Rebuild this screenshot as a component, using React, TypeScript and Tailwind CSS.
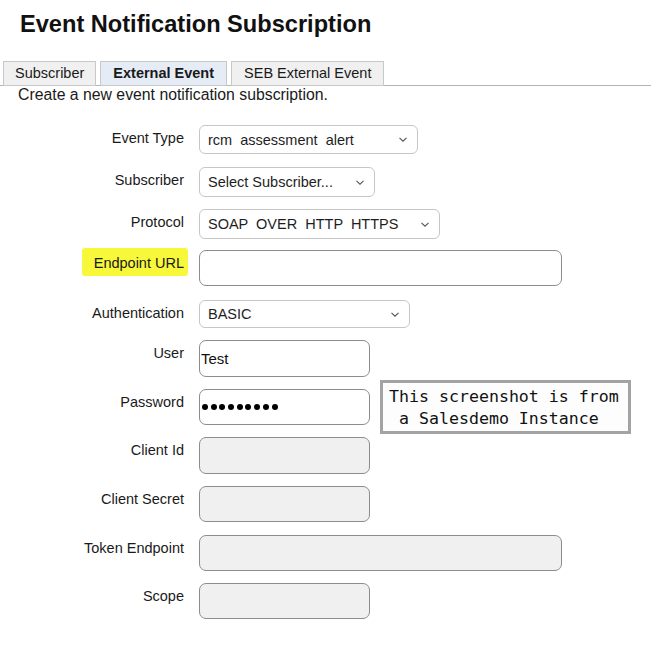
import React from "react";

type Row = {
  label: string;
  rowCls: string;
  kind: "select" | "input";
  fieldCls: string;
  value?: string;
  password?: boolean;
  disabled?: boolean;
  highlight?: boolean;
};

const rows: Row[] = [
  { label: "Event Type", rowCls: "mt-0", kind: "select", fieldCls: "w-[219px] h-[29px]", value: "rcm  assessment  alert" },
  { label: "Subscriber", rowCls: "mt-[13px]", kind: "select", fieldCls: "w-[176px] h-[30px]", value: "Select Subscriber..." },
  { label: "Protocol", rowCls: "mt-[12px]", kind: "select", fieldCls: "w-[241px] h-[30px]", value: "SOAP  OVER  HTTP  HTTPS" },
  { label: "Endpoint URL", rowCls: "mt-[11px]", kind: "input", fieldCls: "w-[363px] h-[36px]", highlight: true },
  { label: "Authentication", rowCls: "mt-[14px]", kind: "select", fieldCls: "w-[211px] h-[28px]", value: "BASIC" },
  { label: "User", rowCls: "mt-[12px]", kind: "input", fieldCls: "w-[171px] h-[37px]", value: "Test" },
  { label: "Password", rowCls: "mt-[12px]", kind: "input", fieldCls: "w-[171px] h-[36px]", password: true },
  { label: "Client Id", rowCls: "mt-[12px]", kind: "input", fieldCls: "w-[171px] h-[37px]", disabled: true },
  { label: "Client Secret", rowCls: "mt-[12px]", kind: "input", fieldCls: "w-[171px] h-[36px]", disabled: true },
  { label: "Token Endpoint", rowCls: "mt-[13px]", kind: "input", fieldCls: "w-[363px] h-[36px]", disabled: true },
  { label: "Scope", rowCls: "mt-[12px]", kind: "input", fieldCls: "w-[171px] h-[36px]", disabled: true },
];

function Chevron() {
  return (
    <svg width="8" height="5" viewBox="0 0 8 5" className="shrink-0">
      <polyline points="0.5,0.8 4,4.2 7.5,0.8" fill="none" stroke="#555" strokeWidth="1.1" />
    </svg>
  );
}

function Field({ row }: { row: Row }) {
  if (row.kind === "select") {
    return (
      <div
        className={`${row.fieldCls} flex items-center justify-between rounded-[6px] border border-[#c6c6c6] bg-white pl-[8px] pr-[10px]`}
      >
        <span className="whitespace-pre text-[14.5px] leading-[18px] text-[#1e1e1e]">{row.value}</span>
        <Chevron />
      </div>
    );
  }
  return (
    <div
      className={`${row.fieldCls} flex items-center rounded-[7px] border border-[#8c8c8c] ${
        row.disabled ? "bg-[#f0f0f0]" : "bg-white"
      } pl-[1px]`}
    >
      {row.value && <span className="text-[15px] leading-[18px] text-[#111]">{row.value}</span>}
      {row.password && (
        <div className="flex items-center gap-[2.7px] pl-[1px]">
          {Array.from({ length: 9 }).map((_, i) => (
            <div key={i} className="h-[6px] w-[6px] rounded-full bg-black" />
          ))}
        </div>
      )}
    </div>
  );
}

export default function App() {
  return (
    <div className="relative h-[650px] w-[651px] overflow-hidden bg-white font-['Liberation_Sans',Arial,sans-serif] text-[#1a1a1a]">
      <h1 className="ml-[20px] pt-[10px] text-[23.6px] font-bold leading-[28px] text-[#111]">
        Event Notification Subscription
      </h1>

      <div className="mt-[23px] flex items-end border-b border-[#b4b4b4] pl-[3px]">
        <div className="-mb-px flex h-[25px] items-center border border-[#c8c8c8] bg-[#f0f0f0] px-[11px] text-[14.5px]">
          Subscriber
        </div>
        <div className="-mb-px ml-[4px] flex h-[25px] items-center border border-[#c8c8c8] bg-[#e5ecf6] px-[12px] text-[14.5px] font-bold">
          External Event
        </div>
        <div className="-mb-px ml-[4px] flex h-[25px] items-center border border-[#c8c8c8] bg-[#f0f0f0] px-[12px] text-[14.5px]">
          SEB External Event
        </div>
      </div>

      <p className="ml-[18px] text-[15.8px] leading-[18px] text-[#1a1a1a]">
        Create a new event notification subscription.
      </p>

      <div className="mt-[21px] flex flex-col">
        {rows.map((row) => (
          <div key={row.label} className={`${row.rowCls} flex items-start`}>
            <div className="w-[184px] shrink-0 pt-[4px] text-right text-[14.5px] leading-[18px] text-[#1a1a1a]">
              {row.highlight ? (
                <span className="relative inline-block">
                  <span className="absolute -bottom-[4px] -left-[12px] -right-[4px] -top-[6px] rounded-[3px] bg-[#f8f83a]" />
                  <span className="relative">{row.label}</span>
                </span>
              ) : (
                row.label
              )}
            </div>
            <div className="ml-[15px]">
              <Field row={row} />
            </div>
          </div>
        ))}
      </div>

      <div className="absolute left-[380px] top-[380px] flex h-[54px] w-[251px] flex-col justify-center border-[3px] border-[#a3a3a3] bg-[#fdfdfd] pl-[6px] pt-[2px] font-['DejaVu_Sans_Mono',monospace] text-[16.6px] leading-[22px] text-[#111]">
        <span className="whitespace-pre">This screenshot is from</span>
        <span className="whitespace-pre"> a Salesdemo Instance</span>
      </div>
    </div>
  );
}
